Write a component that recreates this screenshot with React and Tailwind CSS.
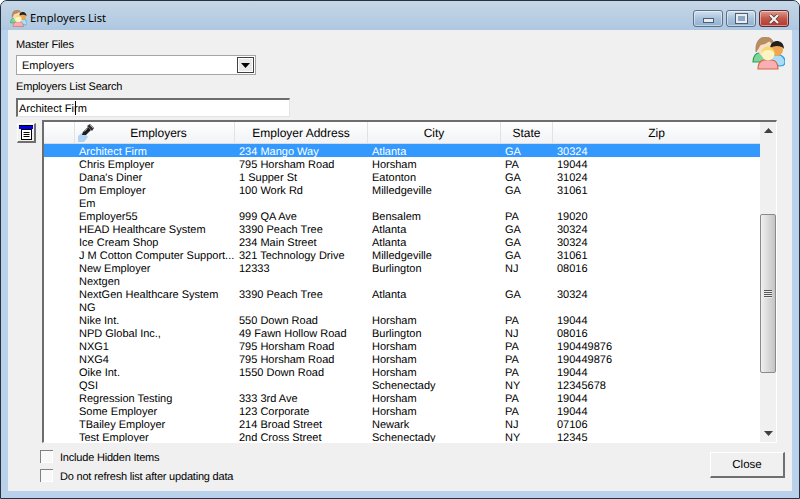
const rows = [
  ["Architect Firm", "234 Mango Way", "Atlanta", "GA", "30324"],
  ["Chris Employer", "795 Horsham Road", "Horsham", "PA", "19044"],
  ["Dana's Diner", "1 Supper St", "Eatonton", "GA", "31024"],
  ["Dm Employer", "100 Work Rd", "Milledgeville", "GA", "31061"],
  ["Em", "", "", "", ""],
  ["Employer55", "999 QA Ave", "Bensalem", "PA", "19020"],
  ["HEAD Healthcare System", "3390 Peach Tree", "Atlanta", "GA", "30324"],
  ["Ice Cream Shop", "234 Main Street", "Atlanta", "GA", "30324"],
  ["J M Cotton Computer Support...", "321 Technology Drive", "Milledgeville", "GA", "31061"],
  ["New Employer", "12333", "Burlington", "NJ", "08016"],
  ["Nextgen", "", "", "", ""],
  ["NextGen Healthcare System", "3390 Peach Tree", "Atlanta", "GA", "30324"],
  ["NG", "", "", "", ""],
  ["Nike Int.", "550 Down Road", "Horsham", "PA", "19044"],
  ["NPD Global Inc.,", "49 Fawn Hollow Road", "Burlington", "NJ", "08016"],
  ["NXG1", "795 Horsham Road", "Horsham", "PA", "190449876"],
  ["NXG4", "795 Horsham Road", "Horsham", "PA", "190449876"],
  ["Oike Int.", "1550 Down Road", "Horsham", "PA", "19044"],
  ["QSI", "", "Schenectady", "NY", "12345678"],
  ["Regression Testing", "333 3rd Ave", "Horsham", "PA", "19044"],
  ["Some Employer", "123 Corporate", "Horsham", "PA", "19044"],
  ["TBailey Employer", "214 Broad Street", "Newark", "NJ", "07106"],
  ["Test Employer", "2nd Cross Street", "Schenectady", "NY", "12345"],
];

function People({ size }) {
  return (
    <svg width={size} height={size} viewBox="0 0 33 33" className="shrink-0">
      <path d="M1 25c0-6 3-9 6-9h6c3 0 5 3 5 9z" fill="#7ed59a" stroke="#2f9e55" strokeWidth="1.2" />
      <path d="M6 11c0-6 3-10 8-10s8 4 8 9c0 5-3 10-8 10S6 16 6 11z" fill="#f6dfc6" />
      <path d="M4 15C3 6 7 0 13 0s10 4 9 11c-1-4-3-6-5-7-3 3-7 3-9 4-1 2-2 4-4 7z" fill="#b98d64" stroke="#a9763f" strokeWidth=".6" />
      <path d="M18 27c0-6 2-9 5-9h4c3 0 6 3 6 7 0 3-2 4-5 4z" fill="#a9dcf8" stroke="#2a9be0" strokeWidth="1.2" />
      <circle cx="25" cy="13" r="6" fill="#efa64e" />
      <path d="M18 12c0-6 4-8 7-8s7 2 7 8c-1-2-4-3-7-3s-6 1-7 3z" fill="#23211f" />
      <path d="M6 32c0-6 3-9 7-9h6c4 0 7 3 7 9z" fill="#f7aeb4" stroke="#d7693c" strokeWidth="1.2" />
      <circle cx="16" cy="17" r="6.5" fill="#fdf3c4" />
      <path d="M9.5 17c0-5 3-7.5 6.500-7.500s6.500 2.500 6.500 7.500c-1-2.500-3-4-6.500-4s-5.500 1.500-6.500 4z" fill="#f5d869" />
    </svg>
  );
}

function Flashlight() {
  return (
    <svg width="17" height="18" viewBox="0 0 17 18">
      <path d="M0 12l5-4 5 5-4 5H0z" fill="#a8cdf2" opacity=".85" />
      <path d="M4 11l1-3 5-5 3 3-5 5z" fill="#1f1f1f" />
      <path d="M9 2l3-2 4 4-2 3z" fill="#333" />
      <path d="M12 1l3 3" stroke="#aaa" strokeWidth="1" />
      <path d="M6.500 7.500l3-3" stroke="#999" strokeWidth="1" />
    </svg>
  );
}

function DocIcon() {
  return (
    <svg width="15" height="15" viewBox="0 0 15 15">
      <rect x="0" y="0" width="14" height="1" fill="#000" />
      <rect x="0" y="1" width="14" height="3" fill="#0000e0" />
      <rect x="2.500" y="4.500" width="10" height="10" fill="#fff" stroke="#000" />
      <path d="M4.500 7.500h6M4.500 9.500h6M4.500 11.500h6" stroke="#000" />
    </svg>
  );
}

function Arrow({ up, cls }) {
  return (
    <svg width="9" height="5" viewBox="0 0 9 5" className={cls}>
      <path d={up ? "M4.500 0L9 5H0z" : "M0 0h9L4.500 5z"} fill="currentColor" />
    </svg>
  );
}

function WinBtn({ cls, children }) {
  return <div className={"h-[17px] flex items-center justify-center rounded-[3px] border border-solid shadow-[inset_0_0_0_1px_rgba(255,255,255,0.45)] " + cls}>{children}</div>;
}

function Check({ label }) {
  return (
    <div className="flex items-center h-[13px]">
      <div className="w-[13px] h-[13px] bg-[#f8f8f8] border-t border-l border-solid border-[#808080] shadow-[inset_-1px_-1px_0_#fff]" />
      <span className="ml-[7px] pt-[4px] tracking-[-0.2px]">{label}</span>
    </div>
  );
}

export default function App() {
  return (
    <div className="w-[800px] h-[499px] overflow-hidden bg-[#b9d1ea] border border-solid border-[#26323e] rounded-t-[7px] flex flex-col text-[11px] leading-[13px] text-black [text-rendering:geometricPrecision] [font-family:Liberation_Sans,Arial,sans-serif]">
      <div className="h-[29px] shrink-0 bg-gradient-to-b from-[#c6d6e6] to-[#aec8e2] flex items-center pt-[6px] pl-[9px] pr-[10px]">
        <People size={17} />
        <span className="ml-[3px] text-[11.2px] [font-family:Noto_Sans,sans-serif]">Employers List</span>
        <div className="ml-auto flex gap-[3px]">
          <WinBtn cls="w-[30px] border-[#5f7086] bg-gradient-to-b from-[#d3e0ee] via-[#a9c2dc] to-[#8fb1d2]">
            <div className="w-[11px] h-[5px] mt-[3px] bg-[#e8edf2] border border-solid border-[#4e5f75]" />
          </WinBtn>
          <WinBtn cls="w-[30px] border-[#5f7086] bg-gradient-to-b from-[#d3e0ee] via-[#a9c2dc] to-[#8fb1d2]">
            <div className="w-[11px] h-[9px] bg-[#8fa8c2] border-[2px] border-solid border-[#e8edf2] outline outline-1 outline-[#4e5f75]" />
          </WinBtn>
          <WinBtn cls="w-[30px] border-[#5a2a30] bg-gradient-to-b from-[#dc9b90] via-[#c4574b] to-[#b5382e]">
            <svg width="12" height="10" viewBox="0 0 12 10">
              <path d="M2 1l8 8M10 1L2 9" stroke="#4a3030" strokeWidth="3.600" />
              <path d="M2 1l8 8M10 1L2 9" stroke="#f2eeee" strokeWidth="2.400" />
            </svg>
          </WinBtn>
        </div>
      </div>

      <div className="flex-1 mx-[7px] mb-[7px] bg-[#f0f0f0] flex flex-col pl-[8px] pr-[7px]">
        <div className="flex items-start pt-[7px]">
          <div className="w-[274px] flex flex-col">
            <div className="h-[14px] pt-[2px] tracking-[-0.18px]">Master Files</div>
            <div className="mt-[4px] w-[240px] h-[20px] bg-white border border-solid border-[#a6a6a6] flex items-center pl-[5px] pr-[1px]">
              <span className="pt-[2px]">Employers</span>
              <div className="ml-auto w-[17px] h-[16px] bg-[#e8e8e8] border border-solid border-[#404040] shadow-[inset_0_0_0_1px_#fff] flex items-center justify-center text-black">
                <Arrow cls="mt-[1px]" />
              </div>
            </div>
            <div className="mt-[5px] h-[14px] pt-[1px] tracking-[-0.18px]">Employers List Search</div>
            <div className="mt-[4px] h-[19px] bg-white border-t-2 border-l-2 border-r border-b border-solid border-t-[#6d6d6d] border-l-[#6d6d6d] border-r-[#e3e3e3] border-b-[#e3e3e3] flex items-center pl-[1px] relative">
              <span className="pt-[2px]">Architect Firm</span>
              <div className="absolute left-[57px] top-[1px] w-[1px] h-[14px] bg-black" />
            </div>
          </div>
          <div className="ml-auto"><People size={33} /></div>
        </div>

        <div className="flex mt-[3px] items-start">
          <div className="ml-[1px] mt-[3px] w-[19px] h-[20px] bg-[#f0f0f0] border-r-2 border-b-2 border-t border-l border-solid border-t-white border-l-white border-r-[#6f6f6f] border-b-[#6f6f6f] flex items-center justify-center">
            <DocIcon />
          </div>
          <div className="ml-[6px] w-[735px] h-[323px] bg-white border-t-2 border-l-2 border-r border-b border-solid border-t-[#6d6d6d] border-l-[#6d6d6d] border-r-white border-b-white flex overflow-hidden">
            <div className="w-[716px] flex flex-col">
              <div className="h-[22px] shrink-0 grid grid-cols-[31px_160px_133px_133px_52px_207px] bg-gradient-to-b from-white to-[#f1f3f5] border-b border-solid border-[#d9dde1] text-center items-stretch text-[12px]">
                <div className="border-r border-solid border-[#e0e3e6]" />
                <div className="relative border-r border-solid border-[#e0e3e6] flex items-center justify-center pl-[8px] pt-[2px]">
                  Employers
                  <div className="absolute left-[3px] top-[2px]"><Flashlight /></div>
                </div>
                <div className="border-r border-solid border-[#e0e3e6] flex items-center justify-center pt-[2px]">Employer Address</div>
                <div className="border-r border-solid border-[#e0e3e6] flex items-center justify-center pt-[2px]">City</div>
                <div className="border-r border-solid border-[#e0e3e6] flex items-center justify-center pt-[2px]">State</div>
                <div className="flex items-center justify-center pt-[2px]">Zip</div>
              </div>
              <div className="flex-1 overflow-hidden">
                {rows.map((r, i) => (
                  <div key={i} className={"h-[13px] grid grid-cols-[31px_160px_133px_133px_52px_207px] whitespace-nowrap leading-[16px] " + (i === 0 ? "bg-[#3399ff] text-white" : "")}>
                    <div />
                    {r.map((c, j) => (
                      <div key={j} className="pl-[4px] h-[13px]">{c}</div>
                    ))}
                  </div>
                ))}
              </div>
            </div>
            <div className="w-[16px] bg-[#f0f0f0] flex flex-col">
              <div className="h-[17px] shrink-0 flex items-center justify-center text-[#404040]"><Arrow up /></div>
              <div className="h-[75px] shrink-0" />
              <div className="h-[159px] shrink-0 border border-solid border-[#8a8a8a] rounded-[2px] bg-gradient-to-r from-[#f0f0f0] to-[#c4c4c4] flex items-center justify-center">
                <div className="w-[8px] h-[8px] bg-[repeating-linear-gradient(180deg,#555_0,#555_1px,#eee_1px,#eee_2px)]" />
              </div>
              <div className="flex-1" />
              <div className="h-[17px] shrink-0 flex items-center justify-center text-[#404040]"><Arrow /></div>
            </div>
          </div>
        </div>

        <div className="flex flex-1 items-start">
          <div className="ml-[24px] mt-[7px] flex flex-col gap-[6px]">
            <Check label="Include Hidden Items" />
            <Check label="Do not refresh list after updating data" />
          </div>
          <div className="ml-auto mt-[9px] w-[75px] h-[26px] pt-[2px] text-[11.5px] bg-[#f0f0f0] border-t border-l border-r-2 border-b-2 border-solid border-t-white border-l-white border-r-[#6f6f6f] border-b-[#6f6f6f] flex items-center justify-center">Close</div>
        </div>
      </div>
    </div>
  );
}
